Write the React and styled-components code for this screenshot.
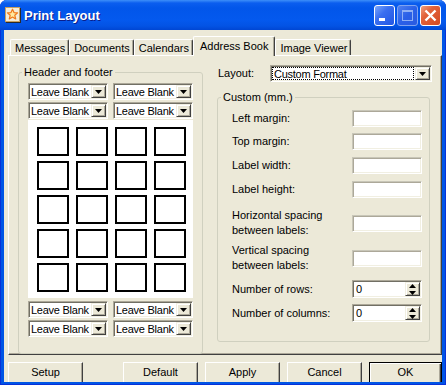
import React from 'react';
import styled, { createGlobalStyle } from 'styled-components';

const GlobalStyle = createGlobalStyle`
  html, body {
    margin: 0;
    padding: 0;
    background: #ffffff;
  }
  body {
    font-family: "Liberation Sans", Arial, sans-serif;
    font-size: 11px;
    color: #000;
  }
`;

const Window = styled.div`
  width: 446px;
  height: 385px;
  display: flex;
  flex-direction: column;
  background: #0055e5;
  box-shadow: inset 1px 0 #0831d9, inset -1px 0 #0831d9, inset 0 -1px #0831d9;
  border-radius: 7px 7px 0 0;
  overflow: hidden;
`;

const TitleBar = styled.div`
  height: 30px;
  flex: none;
  display: flex;
  align-items: center;
  padding: 0 5px 0 5px;
  box-sizing: border-box;
  background: linear-gradient(
    180deg,
    #3d8ff9 0px,
    #0b5eef 3px,
    #0256ea 8px,
    #0459ee 20px,
    #0353e4 26px,
    #0046d3 30px
  );
`;

const TitleText = styled.div`
  flex: 1;
  margin-left: 3px;
  font-family: "Liberation Sans", Arial, sans-serif;
  font-weight: bold;
  font-size: 13px;
  color: #fff;
  text-shadow: 1px 1px 0 #0a1e8c;
`;

const Controls = styled.div`
  display: flex;
  gap: 2px;
`;

const CtrlButton = styled.div`
  width: 21px;
  height: 21px;
  box-sizing: border-box;
  border-radius: 3px;
  border: 1px solid ${p => (p.$disabled ? '#7fa3f0' : '#fff')};
  background: ${p =>
    p.$close
      ? 'linear-gradient(135deg, #f0a080 0%, #e2623a 35%, #d44a22 100%)'
      : p.$disabled
      ? 'linear-gradient(135deg, #4f80f0 0%, #2a60e8 50%, #2a5ae0 100%)'
      : 'linear-gradient(135deg, #7aa6fb 0%, #3a6ff0 40%, #2156e4 100%)'};
  display: flex;
  align-items: center;
  justify-content: center;
`;

const Body = styled.div`
  flex: 1;
  min-height: 0;
  margin: 0 4px 3px 4px;
  padding: 6px 0 0 4px;
  background: #ece9d8;
  display: flex;
  flex-direction: column;
  overflow: hidden;
`;

const TabStrip = styled.div`
  height: 19px;
  flex: none;
  display: flex;
  align-items: flex-end;
  padding-left: 2px;
  position: relative;
  z-index: 1;
`;

const Tab = styled.div`
  height: ${p => (p.$active ? '20px' : '16px')};
  margin-bottom: ${p => (p.$active ? '-1px' : '0')};
  padding: ${p => (p.$active ? '0 6px 2px 6px' : '0 3px 0 4px')};
  box-sizing: border-box;
  display: flex;
  align-items: center;
  background: #ece9d8;
  border-top: 1px solid #fff;
  border-left: 1px solid #fff;
  border-right: 1px solid #404040;
  box-shadow: inset -1px 0 #aca899;
  border-radius: 2px 2px 0 0;
  white-space: nowrap;
`;

const Panel = styled.div`
  width: 434px;
  height: 300px;
  flex: none;
  box-sizing: border-box;
  border: 1px solid;
  border-color: #fff #404040 #404040 #fff;
  box-shadow: inset -1px -1px 0 #aca899;
  display: flex;
  gap: 14px;
  padding: 10px 0 0 9px;
`;

const Fieldset = styled.fieldset`
  margin: 0;
  padding: 0;
  width: ${p => p.$w}px;
  min-width: 0;
  box-sizing: border-box;
  border: 1px solid #d0d0bf;
  border-radius: 3px;
`;

const Legend = styled.legend`
  margin-left: 3px;
  padding: 0 2px;
  line-height: 13px;
  font-size: 11px;
`;

const GroupInner = styled.div`
  display: flex;
  flex-direction: column;
  padding: ${p => p.$pad};
`;

const ComboPair = styled.div`
  display: grid;
  grid-template-columns: 80px 80px;
  gap: 5px;
  margin-top: ${p => p.$mt || 0}px;
`;

const ComboBox = styled.div`
  height: 17px;
  width: ${p => (p.$w ? `${p.$w}px` : 'auto')};
  box-sizing: border-box;
  display: flex;
  align-items: stretch;
  background: #fff;
  border: 1px solid;
  border-color: #aca899 #fff #fff #aca899;
  box-shadow: inset 1px 1px 0 #716f64, inset -1px -1px 0 #f1efe2;
  padding: 1px;
`;

const ComboText = styled.div`
  flex: 1;
  min-width: 0;
  display: flex;
  align-items: center;
  padding-left: 1px;
  margin: ${p => (p.$focus ? '1px 2px 1px 1px' : '0')};
  outline: ${p => (p.$focus ? '1px dotted #000' : 'none')};
  letter-spacing: -0.25px;
  white-space: nowrap;
`;

const ArrowButton = styled.div`
  width: 15px;
  flex: none;
  box-sizing: border-box;
  background: #ece9d8;
  border: 1px solid;
  border-color: #f1efe2 #404040 #404040 #f1efe2;
  box-shadow: inset 1px 1px 0 #fff, inset -1px -1px 0 #aca899;
  display: flex;
  flex-direction: column;
  align-items: center;
  justify-content: center;
  gap: 1px;
`;

const Preview = styled.div`
  margin: 1px 0 3px 0;
  height: 178px;
  box-sizing: border-box;
  background: #fff;
  padding: 7px 0 0 9px;
  display: grid;
  grid-template-columns: repeat(4, 32px);
  grid-auto-rows: 29px;
  column-gap: 7px;
  row-gap: 5px;
`;

const Label = styled.div`
  width: ${p => p.$w}px;
  flex: none;
  line-height: 15px;
`;

const RightCol = styled.div`
  width: 215px;
  display: flex;
  flex-direction: column;
`;

const LayoutRow = styled.div`
  display: flex;
  align-items: center;
  padding-left: 1px;
  margin-top: -1px;
`;

const FieldRow = styled.div`
  display: flex;
  align-items: center;
  height: ${p => p.$h}px;
  margin-top: ${p => p.$mt}px;
`;

const TextInput = styled.div`
  width: 70px;
  height: 17px;
  box-sizing: border-box;
  background: #fff;
  border: 1px solid;
  border-color: #c8c6b8 #fff #fff #c8c6b8;
  box-shadow: inset 1px 1px 0 #aca899, inset -1px -1px 0 #f1efe2;
`;

const SpinBox = styled.div`
  width: 71px;
  height: 18px;
  box-sizing: border-box;
  display: flex;
  align-items: stretch;
  background: #fff;
  border: 1px solid;
  border-color: #aca899 #fff #fff #aca899;
  box-shadow: inset 1px 1px 0 #716f64, inset -1px -1px 0 #f1efe2;
  padding: 1px;
`;

const SpinValue = styled.div`
  flex: 1;
  display: flex;
  align-items: center;
  padding-left: 2px;
`;

const ButtonBar = styled.div`
  display: flex;
  gap: 7px;
  margin-top: 7px;
  flex: none;
`;

const Button = styled.div`
  width: ${p => p.$w || 75}px;
  height: 23px;
  flex: none;
  box-sizing: border-box;
  margin-left: ${p => p.$ml || 0}px;
  background: #ece9d8;
  border: 1px solid;
  border-color: ${p => (p.$default ? '#000' : '#fff #404040 #404040 #fff')};
  box-shadow: ${p =>
    p.$default
      ? 'inset 1px 1px 0 #fff, inset -1px -1px 0 #404040, inset -2px -2px 0 #aca899'
      : 'inset -1px -1px 0 #aca899'};
  display: flex;
  align-items: center;
  justify-content: center;
  padding-bottom: 3px;
`;

const Cell = styled.div`
  border: 2px solid #000;
`;

const DownArrow = () => (
  <svg width="7" height="4" viewBox="0 0 7 4">
    <path d="M0 0h7L3.5 4z" fill="#000" />
  </svg>
);

const SpinArrows = () => (
  <svg width="7" height="11" viewBox="0 0 7 11">
    <path d="M3.5 0L7 4H0z" fill="#000" />
    <path d="M0 7h7L3.5 11z" fill="#000" />
  </svg>
);

const Combo = ({ text, w, focus }) => (
  <ComboBox $w={w}>
    <ComboText $focus={focus}>{text}</ComboText>
    <ArrowButton>
      <DownArrow />
    </ArrowButton>
  </ComboBox>
);

const AppIcon = () => (
  <svg width="16" height="16" viewBox="0 0 16 16">
    <rect x="0.5" y="0.5" width="14" height="14" fill="#f4ecd8" stroke="#c8a060" />
    <rect x="15" y="1" width="1" height="15" fill="#2a2a2a" />
    <rect x="1" y="15" width="15" height="1" fill="#2a2a2a" />
    <path
      d="M7.5 2.2l1.5 3.4 3.6.3-2.8 2.4.9 3.6-3.2-1.9-3.2 1.9.9-3.6L2.4 5.9l3.6-.3z"
      fill="#ffe9a0"
      stroke="#f07818"
      strokeWidth="1.2"
      strokeLinejoin="round"
    />
  </svg>
);

const fields = [
  { label: 'Left margin:', h: 17, mt: 0 },
  { label: 'Top margin:', h: 17, mt: 6 },
  { label: 'Label width:', h: 17, mt: 7 },
  { label: 'Label height:', h: 17, mt: 7 },
  { label: ['Horizontal spacing', 'between labels:'], h: 30, mt: 10 },
  { label: ['Vertical spacing', 'between labels:'], h: 30, mt: 5 },
];

const spins = [
  { label: 'Number of rows:', mt: 7 },
  { label: 'Number of columns:', mt: 6 },
];

const tabs = ['Messages', 'Documents', 'Calendars', 'Address Book', 'Image Viewer'];

export default function App() {
  return (
    <>
      <GlobalStyle />
      <Window>
        <TitleBar>
          <AppIcon />
          <TitleText>Print Layout</TitleText>
          <Controls>
            <CtrlButton>
              <svg width="19" height="19" viewBox="0 0 19 19">
                <rect x="4" y="12" width="6" height="3" fill="#fff" />
              </svg>
            </CtrlButton>
            <CtrlButton $disabled>
              <svg width="19" height="19" viewBox="0 0 19 19">
                <rect x="4.5" y="4.5" width="10" height="10" fill="none" stroke="#8fb0f4" />
                <rect x="4" y="4" width="11" height="2" fill="#8fb0f4" />
              </svg>
            </CtrlButton>
            <CtrlButton $close>
              <svg width="19" height="19" viewBox="0 0 19 19">
                <path d="M4.5 4.5l10 10M14.5 4.5l-10 10" stroke="#fff" strokeWidth="2.4" />
              </svg>
            </CtrlButton>
          </Controls>
        </TitleBar>
        <Body>
          <TabStrip>
            {tabs.map(t => (
              <Tab key={t} $active={t === 'Address Book'}>
                {t}
              </Tab>
            ))}
          </TabStrip>
          <Panel>
            <Fieldset $w={185}>
              <Legend>Header and footer</Legend>
              <GroupInner $pad="4px 9px 6px 9px">
                <ComboPair>
                  <Combo text="Leave Blank" />
                  <Combo text="Leave Blank" />
                </ComboPair>
                <ComboPair $mt={2}>
                  <Combo text="Leave Blank" />
                  <Combo text="Leave Blank" />
                </ComboPair>
                <Preview>
                  {Array.from({ length: 20 }).map((_, i) => (
                    <Cell key={i} />
                  ))}
                </Preview>
                <ComboPair>
                  <Combo text="Leave Blank" />
                  <Combo text="Leave Blank" />
                </ComboPair>
                <ComboPair $mt={2}>
                  <Combo text="Leave Blank" />
                  <Combo text="Leave Blank" />
                </ComboPair>
              </GroupInner>
            </Fieldset>
            <RightCol>
              <LayoutRow>
                <Label $w={52}>Layout:</Label>
                <Combo text="Custom Format" w={162} focus />
              </LayoutRow>
              <Fieldset $w={213} style={{ marginTop: 9 }}>
                <Legend>Custom (mm.)</Legend>
                <GroupInner $pad="6px 7px 19px 14px">
                  {fields.map((f, i) => (
                    <FieldRow key={i} $h={f.h} $mt={f.mt}>
                      <Label $w={120}>
                        {Array.isArray(f.label) ? (
                          <>
                            {f.label[0]}
                            <br />
                            {f.label[1]}
                          </>
                        ) : (
                          f.label
                        )}
                      </Label>
                      <TextInput />
                    </FieldRow>
                  ))}
                  {spins.map((s, i) => (
                    <FieldRow key={i} $h={18} $mt={s.mt}>
                      <Label $w={120}>{s.label}</Label>
                      <SpinBox>
                        <SpinValue>0</SpinValue>
                        <ArrowButton>
                          <SpinArrows />
                        </ArrowButton>
                      </SpinBox>
                    </FieldRow>
                  ))}
                </GroupInner>
              </Fieldset>
            </RightCol>
          </Panel>
          <ButtonBar>
            <Button>Setup</Button>
            <Button $ml={33}>Default</Button>
            <Button>Apply</Button>
            <Button>Cancel</Button>
            <Button $default $w={73}>
              OK
            </Button>
          </ButtonBar>
        </Body>
      </Window>
    </>
  );
}
